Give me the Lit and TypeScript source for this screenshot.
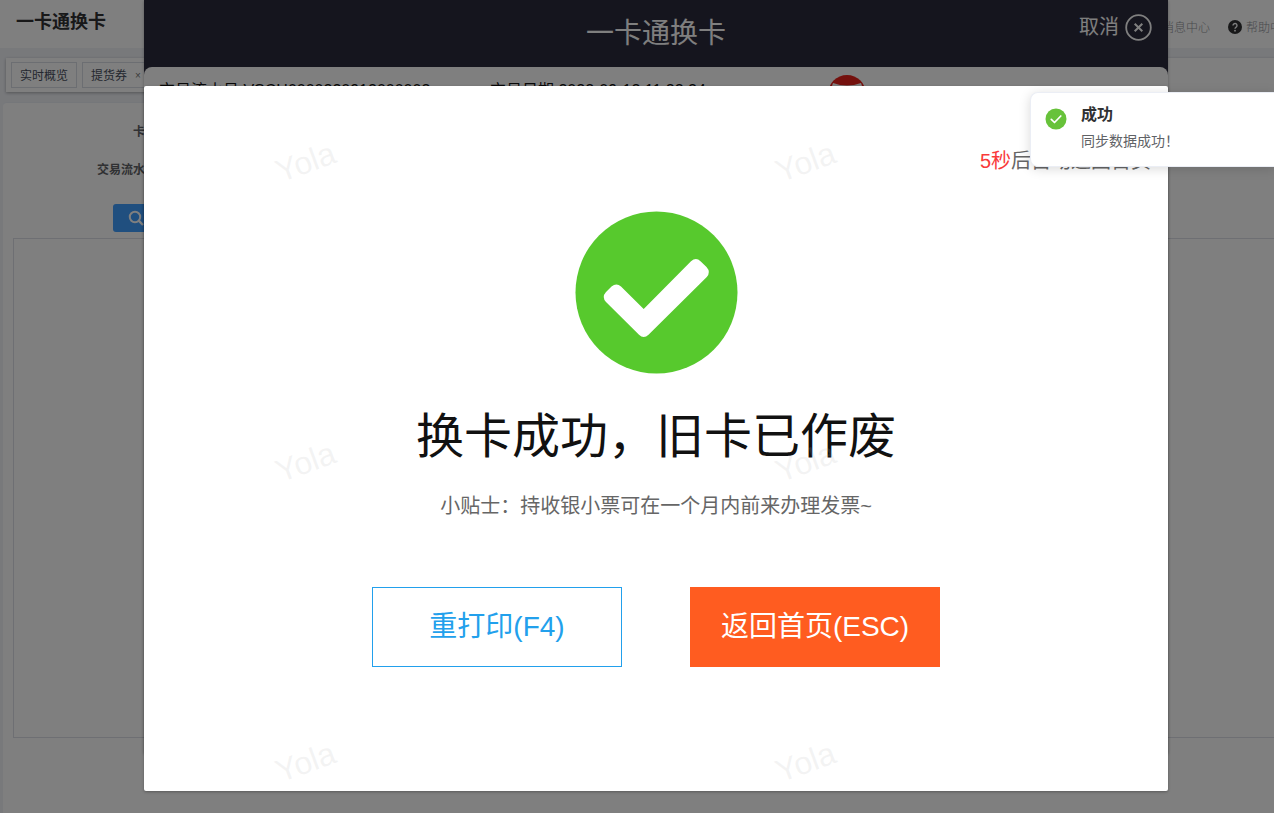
import { LitElement, html, css } from "lit";
import { customElement, property } from "lit/decorators.js";

const textFamily = css`"Liberation Sans", "Noto Sans CJK SC", sans-serif`;

/* Page that lies under the dialogs: header, open tabs and the query card. */
@customElement("shop-page")
class ShopPage extends LitElement {
  static styles = css`
    :host { display: flex; flex-direction: column; min-height: 100%; background: #f0f2f7; font: 12px/18px ${textFamily}; color: #303133; }
    * { box-sizing: border-box; }
    header { display: flex; align-items: center; justify-content: space-between; height: 48px; padding: 0 18px 0 16px; background: #fff; }
    h1 { margin: 0; font-size: 18px; line-height: 24px; padding-bottom: 4px; }
    .links { display: flex; gap: 18px; padding-top: 8px; }
    .links a { display: flex; align-items: center; gap: 4px; color: #909399; font-weight: 300; text-decoration: none; white-space: nowrap; }
    .links svg { margin-bottom: 2px; }
    .tabs { display: flex; gap: 5px; margin: 10px 6px 0; padding: 4px 5px; height: 34px; background: #fff; box-shadow: 0 1px 3px rgba(0, 0, 0, 0.3); }
    .tabs a { display: flex; align-items: center; gap: 8px; height: 26px; padding: 2px 8px 0; border: 1px solid #d8dce5; color: #495060; text-decoration: none; }
    .close { font-size: 10px; color: #777; }
    .card { flex: 1; margin: 10px 3px 0; padding: 10px 10px 0; border-radius: 4px 4px 0 0; background: #fff; border-top: 1px solid #ebeef5; }
    .row { display: flex; align-items: center; height: 38px; }
    .row label { width: 144px; text-align: right; font-weight: 700; color: #606266; }
    .row input { width: 200px; height: 28px; margin-left: 12px; border: 1px solid #dcdfe6; border-radius: 4px; }
    .search { display: flex; align-items: center; height: 28px; margin: 15px 0 0 100px; padding: 0 15px; border: 0; border-radius: 3px; background: #409eff; color: #fff; font: inherit; gap: 5px; }
    .result { height: 500px; margin-top: 6px; border: 1px solid #dcdfe6; }
  `;
  render() {
    return html`
      <header>
        <h1>一卡通换卡</h1>
        <nav class="links">
          <a href="#messages">消息中心</a>
          <a href="#help">
            <svg width="14" height="14" viewBox="0 0 14 14" aria-hidden="true">
              <circle cx="7" cy="7" r="7" fill="#303133" />
              <path d="M5 5.5a2 2 0 1 1 3.2 1.6c-.8.6-1.2.8-1.2 1.6" fill="none" stroke="#fff" stroke-width="1.4" />
              <circle cx="7" cy="10.7" r=".9" fill="#fff" />
            </svg>
            帮助中心
          </a>
        </nav>
      </header>
      <nav class="tabs">
        <a href="#overview">实时概览</a>
        <a href="#coupon">提货券<span class="close">×</span></a>
      </nav>
      <section class="card">
        <div class="row"><label for="card">卡号</label><input id="card" /></div>
        <div class="row"><label for="serial">交易流水号</label><input id="serial" /></div>
        <button class="search">
          <svg width="16" height="16" viewBox="0 0 16 16" fill="none" stroke="#fff" stroke-width="2" aria-hidden="true">
            <circle cx="7" cy="7" r="5.2" /><path d="M10.7 10.7 15 15" stroke-width="2.4" />
          </svg>查询
        </button>
        <div class="result"></div>
      </section>
    `;
  }
}

/* Full-height dialog with the details of the exchanged card. */
@customElement("exchange-dialog")
class ExchangeDialog extends LitElement {
  static styles = css`
    :host { display: block; background: #2a2a3c; color: #111; font: 16px/24px ${textFamily}; box-shadow: 0 1px 3px rgba(0, 0, 0, 0.3); }
    header { display: grid; grid-template-columns: 1fr auto 1fr; height: 67px; color: #fff; }
    h2 { margin: 0; grid-column: 2; align-self: center; font-size: 28px; line-height: 40px; font-weight: 400; }
    button { display: flex; align-items: center; justify-self: end; align-self: start; gap: 6px; margin: 13px 16px 0 0; padding: 0; border: 0; background: none; color: inherit; font: 20px/28px ${textFamily}; }
    .details { display: grid; grid-template-columns: 331px 338px 1fr; height: 670px; padding: 8px 15px; border-radius: 8px 8px 0 0; background: #fff; }
    .details span { padding-top: 4px; }
  `;
  render() {
    return html`
      <header>
        <h2>一卡通换卡</h2>
        <button>取消
          <svg width="27" height="27" viewBox="0 0 27 27" fill="none" stroke="#fff" stroke-width="2" aria-hidden="true">
            <circle cx="13.5" cy="13.5" r="12.3" stroke-width="1.8" /><path d="m9.7 9.7 7.6 7.6m0-7.6-7.6 7.6" />
          </svg>
        </button>
      </header>
      <div class="details">
        <span>交易流水号:VSCH0000220912000003</span>
        <span>交易日期:2022-09-12 11:22:24</span>
        <svg width="38" height="38" viewBox="0 0 38 38" aria-hidden="true">
          <circle cx="19" cy="19" r="19" fill="#e8211b" />
          <path d="M5 8q14 5 28 0l2 6q-16 4-32 0z" fill="#fff" />
          <path d="M8 11q11 3 22 0l1 6H7z" fill="#e8211b" />
        </svg>
      </div>
    `;
  }
}

/* Outcome of the exchange, with the countdown and the two follow-up actions. */
@customElement("result-dialog")
class ResultDialog extends LitElement {
  @property({ type: Number }) seconds = 5;
  static styles = css`
    :host { position: relative; display: block; overflow: hidden; border-radius: 2px; background: #fff; font: 20px/28px ${textFamily}; color: #666; box-shadow: 0 1px 3px rgba(0, 0, 0, 0.3); }
    .body { display: flex; flex-direction: column; align-items: center; padding: 61px 17px 124px; }
    .countdown { align-self: flex-end; margin: 0 0 36px; }
    .countdown b { color: #f93a3a; font-weight: 400; }
    .mark { display: block; }
    h2 { margin: 27px 0 19px; font-size: 48px; line-height: 72px; font-weight: 400; color: #111; }
    .tip { margin: 0; }
    .actions { display: flex; flex-wrap: wrap; justify-content: center; gap: 68px; margin-top: 67px; }
    button { width: 250px; height: 80px; padding: 0; border: 1px solid #22a0ec; background: #fff; color: #22a0ec; font: 28px/40px ${textFamily}; }
    .primary { border-color: #ff5c20; background: #ff5c20; color: #fff; }
    .watermark { position: absolute; inset: -74px 0 0 -88px; display: grid; grid-template-columns: repeat(auto-fill, 500px); grid-auto-rows: 300px; place-items: center; pointer-events: none; }
    .watermark span { color: rgba(184, 184, 184, 0.17); font-size: 32px; line-height: 36px; transform: rotate(-20deg); }
  `;
  render() {
    return html`
      <div class="body">
        <p class="countdown"><b>${this.seconds}秒</b>后自动返回首页</p>
        <svg class="mark" width="163" height="163" viewBox="0 0 163 163" aria-hidden="true">
          <circle cx="81.5" cy="81.5" r="81" fill="#57c92d" />
          <path d="M36.5 75.5Q41.5 71.5 46 75.5L68.7 98 116 50.2Q121 46 125.5 50.2L131.5 56Q136 61 131.8 66L73.5 123.7Q68.7 128.5 64 123.7L31 91Q26.500 86 31 81Z" fill="#fff" />
        </svg>
        <h2>换卡成功，旧卡已作废</h2>
        <p class="tip">小贴士：持收银小票可在一个月内前来办理发票~</p>
        <div class="actions">
          <button>重打印(F4)</button>
          <button class="primary">返回首页(ESC)</button>
        </div>
      </div>
      <div class="watermark" aria-hidden="true">
        ${Array.from({ length: 6 }, () => html`<span>Yola</span>`)}
      </div>
    `;
  }
}

@customElement("success-toast")
class SuccessToast extends LitElement {
  static styles = css`
    :host { box-sizing: border-box; display: flex; gap: 14px; padding: 12px 14px 15px; border: 1px solid #ebeef5; border-right: 0; border-radius: 8px 0 0 8px; background: #fff; font: 14px/20px ${textFamily}; color: #606266; box-shadow: 0 2px 12px rgba(0, 0, 0, 0.15); }
    svg { flex: none; margin-top: 3px; }
    h3 { margin: 0 0 6px; font-size: 16px; line-height: 20px; color: #303133; }
    p { margin: 0; }
  `;
  render() {
    return html`
      <svg width="22" height="22" viewBox="0 0 22 22" aria-hidden="true">
        <circle cx="11" cy="11" r="10.5" fill="#67c23a" />
        <path d="m6.3 11.3 3.2 3.2 6.3-6.5" fill="none" stroke="#fff" stroke-width="1.7" stroke-linecap="round" stroke-linejoin="round" />
      </svg>
      <div><h3>成功</h3><p>同步数据成功！</p></div>
    `;
  }
}

@customElement("app-root")
class AppRoot extends LitElement {
  static styles = css`
    :host { position: relative; display: block; height: 100vh; overflow: hidden; }
    .stage { position: relative; width: calc(100% + 38px); height: 100%; }
    shop-page { height: 100%; }
    .layer { position: absolute; inset: 0; display: flex; justify-content: center; align-items: flex-start; }
    .layer > * { width: 1024px; }
    .mask { background: rgba(0, 0, 0, 0.5); padding-top: 86px; }
    success-toast { position: absolute; top: 92px; right: 0; width: 244px; }
  `;
  render() {
    return html`
      <div class="stage">
        <shop-page></shop-page>
        <div class="layer"><exchange-dialog></exchange-dialog></div>
        <div class="layer mask"><result-dialog></result-dialog></div>
      </div>
      <success-toast role="status"></success-toast>
    `;
  }
}
